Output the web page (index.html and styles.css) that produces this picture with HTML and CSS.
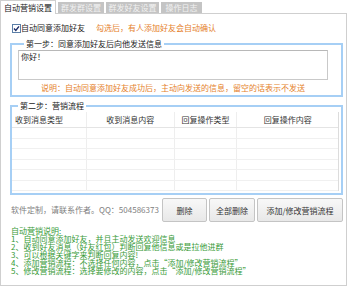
FILE: index.html
```html
<!DOCTYPE html>
<html lang="zh-CN">
<head>
<meta charset="utf-8">
<link rel="stylesheet" href="styles.css">
</head>
<body>
<div class="tabs">
  <div class="tab active">自动营销设置</div>
  <div class="tab t2">群发群设置</div>
  <div class="tab t3">群发好友设置</div>
  <div class="tab t4">操作日志</div>
</div>
<div class="panel">
  <div class="check-row">
    <span class="cb"><svg width="9" height="9" viewBox="0 0 9 9"><rect x="0.5" y="0.5" width="8" height="8" fill="#fff" stroke="#5b7fa8"/><path d="M2 4.6 L3.8 6.4 L7 2.4" fill="none" stroke="#1a2a66" stroke-width="1.4"/></svg></span>
    <span class="cb-label">自动同意添加好友</span>
    <span class="hint">勾选后，有人添加好友会自动确认</span>
  </div>
  <fieldset class="group g1">
    <legend>第一步：同意添加好友后向他发送信息</legend>
    <div class="textarea">你好！</div>
    <div class="note">说明：自动同意添加好友成功后，主动向发送的信息，留空的话表示不发送</div>
  </fieldset>
  <fieldset class="group g2">
    <legend>第二步：营销流程</legend>
    <div class="table">
      <div class="row head">
        <div class="c c1 left">收到消息类型</div>
        <div class="c c2">收到消息内容</div>
        <div class="c c3">回复操作类型</div>
        <div class="c c4">回复操作内容</div>
      </div>
      <div class="row"><div class="c c1"></div><div class="c c2"></div><div class="c c3"></div><div class="c c4"></div></div>
      <div class="row"><div class="c c1"></div><div class="c c2"></div><div class="c c3"></div><div class="c c4"></div></div>
      <div class="row"><div class="c c1"></div><div class="c c2"></div><div class="c c3"></div><div class="c c4"></div></div>
      <div class="row"><div class="c c1"></div><div class="c c2"></div><div class="c c3"></div><div class="c c4"></div></div>
      <div class="row"><div class="c c1"></div><div class="c c2"></div><div class="c c3"></div><div class="c c4"></div></div>
      <div class="row"><div class="c c1"></div><div class="c c2"></div><div class="c c3"></div><div class="c c4"></div></div>
    </div>
  </fieldset>
  <div class="actions">
    <div class="contact">软件定制，请联系作者。QQ：504586373</div>
    <button class="btn b1">删除</button>
    <button class="btn b2">全部删除</button>
    <button class="btn b3">添加/修改营销流程</button>
  </div>
  <div class="help">
    <div>自动营销说明:</div>
    <div>1、自动同意添加好友，并且主动发送欢迎信息</div>
    <div>2、收到好友消息（好友红包）判断回复他信息或是拉他进群</div>
    <div>3、可以根据关键字来判断回复内容!</div>
    <div>4、添加营销流程：不选择任何内容，点击“添加/修改营销流程”</div>
    <div>5、修改营销流程：选择要修改的内容，点击“添加/修改营销流程”</div>
  </div>
</div>
</body>
</html>
```

FILE: styles.css
```css
* { box-sizing: border-box; }
html, body { margin: 0; padding: 0; background: #fff; }
body {
  font-family: "Noto Sans CJK SC", "Noto Sans", sans-serif;
  font-size: 8px;
  color: #222;
  width: 348px;
  height: 288px;
  overflow: hidden;
}
.tabs {
  display: flex;
  align-items: flex-end;
  height: 14px;
  position: relative;
  z-index: 1;
}
.tab {
  height: 11px;
  line-height: 11px;
  background: #c4c4c4;
  color: #f2f2f2;
  text-align: center;
  margin-left: 2px;
  margin-bottom: 1px;
  white-space: nowrap;
}
.tab.active {
  height: 14px;
  line-height: 13px;
  width: 56px;
  margin: 0;
  background: #fff;
  color: #222;
  border: 1px solid #cfcfcf;
  border-bottom: none;
}
.t2 { width: 46px; }
.t3 { width: 53px; }
.t4 { width: 41px; }
.panel {
  margin-top: -1px;
  width: 347px;
  height: 273px;
  border: 1px solid #cfcfcf;
  padding: 9px 0 0 9px;
}
.check-row {
  display: flex;
  align-items: center;
  height: 10px;
  line-height: 10px;
  padding-left: 2px;
  white-space: nowrap;
}
.cb { display: flex; width: 9px; height: 9px; }
.hint { color: #e5812b; margin-left: 11px; }
.group {
  margin: 0;
  width: 333px;
  border: 2px solid #a6cff5;
  min-inline-size: 0;
}
.group legend {
  padding: 0 2px;
  margin-left: 6px;
  line-height: 10px;
  color: #222;
}
.g1 {
  margin-top: 6px;
  padding: 1px 13px 2px 6px;
}
.textarea {
  height: 30px;
  border: 1px solid #c9c9c9;
  border-top-color: #b8b8b8;
  padding: 1px 2px;
  line-height: 10px;
  background: #fff;
}
.note {
  color: #e5812b;
  line-height: 10px;
  margin-top: 3px;
  padding-left: 23px;
  white-space: nowrap;
}
.g2 {
  margin-top: 4px;
  padding: 1px 2px 0 0;
  height: 94px;
  overflow: hidden;
}
.table {
  width: 327px;
  border-right: 1px solid #dcdcdc;
}
.row {
  display: flex;
  height: 10.5px;
  border-bottom: 1px solid #f0f0f0;
}
.row.head {
  height: 16px;
  border-bottom: 1px solid #e4e4e4;
  align-items: center;
  line-height: 10px;
  color: #333;
}
.c { height: 100%; border-right: 1px solid #eeeeee; text-align: center; display: flex; align-items: center; justify-content: center; white-space: nowrap; }
.c.left { justify-content: flex-start; padding-left: 3px; }
.c1 { width: 75px; }
.c2 { width: 88px; }
.c3 { width: 63px; }
.c4 { width: 101px; border-right: none; }
.actions {
  display: flex;
  align-items: center;
  margin-top: 3px;
  height: 24px;
  width: 333px;
}
.contact { flex: 1; color: #808080; line-height: 10px; padding-left: 1px; white-space: nowrap; }
.btn {
  height: 24px;
  font-family: inherit;
  font-size: 8px;
  color: #333;
  background: linear-gradient(#f8f8f8, #e8e8e8);
  border: 1px solid #c4c4c4;
  border-radius: 2px;
  padding: 0;
  margin-left: 2px;
  white-space: nowrap;
}
.b1 { width: 45px; }
.b2 { width: 46px; }
.b3 { width: 86px; }
.help {
  color: #379a37;
  line-height: 8px;
  margin-top: 5px;
  padding-left: 1px;
  white-space: nowrap;
}
```
